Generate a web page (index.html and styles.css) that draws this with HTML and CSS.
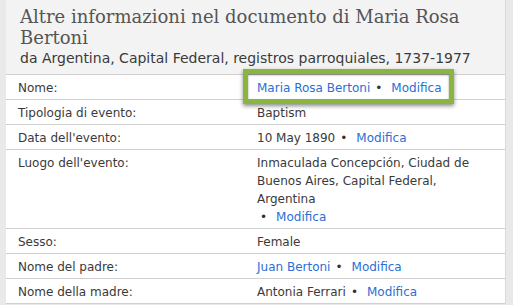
FILE: index.html
```html
<!DOCTYPE html>
<html lang="it">
<head>
<meta charset="utf-8">
<title>Altre informazioni nel documento</title>
<link rel="stylesheet" href="styles.css">
</head>
<body>
<section class="panel">
  <header class="panel-head">
    <h1 class="title">Altre informazioni nel documento di Maria Rosa Bertoni</h1>
    <p class="subtitle">da Argentina, Capital Federal, registros parroquiales, 1737-1977</p>
  </header>
  <dl class="facts">
    <div class="row">
      <dt>Nome:</dt>
      <dd><span class="focus"><a href="#">Maria Rosa Bertoni</a><span class="dot">•</span><a href="#">Modifica</a><span class="focus-ring"></span></span></dd>
    </div>
    <div class="row">
      <dt>Tipologia di evento:</dt>
      <dd>Baptism</dd>
    </div>
    <div class="row">
      <dt>Data dell'evento:</dt>
      <dd>10 May 1890<span class="dot">•</span><a href="#">Modifica</a></dd>
    </div>
    <div class="row">
      <dt>Luogo dell'evento:</dt>
      <dd><span class="place">Inmaculada Concepción, Ciudad de Buenos Aires, Capital Federal, Argentina</span><span class="dot dot-lead">•</span><a href="#">Modifica</a></dd>
    </div>
    <div class="row">
      <dt>Sesso:</dt>
      <dd>Female</dd>
    </div>
    <div class="row">
      <dt>Nome del padre:</dt>
      <dd><a href="#">Juan Bertoni</a><span class="dot">•</span><a href="#">Modifica</a></dd>
    </div>
    <div class="row">
      <dt>Nome della madre:</dt>
      <dd>Antonia Ferrari<span class="dot">•</span><a href="#">Modifica</a></dd>
    </div>
  </dl>
</section>
</body>
</html>
```
FILE: styles.css
```css
html, body {
  margin: 0;
  padding: 0;
}

body {
  background: #e9e9e9;
  font-family: "DejaVu Sans", Verdana, sans-serif;
  font-size: 12px;
  color: #3a3a3a;
}

.panel {
  margin-left: 6px;
  width: 499px;
  border-right: 1px solid #d9d9d9;
  background: #fff;
}

.panel-head {
  background: #f3f3f3;
  padding: 6px 14px 7px;
}

.title {
  margin: 0;
  font-family: "DejaVu Serif", Georgia, serif;
  font-weight: normal;
  font-size: 18px;
  line-height: 21px;
  color: #555;
}

.subtitle {
  margin: 1px 0 0;
  font-size: 14px;
  line-height: 18px;
  color: #3a3a3a;
}

.facts {
  margin: 0;
}

.row {
  display: grid;
  grid-template-columns: 239px 1fr;
  padding: 4px 12px 2px;
  border-top: 1px solid #cfcfcf;
  line-height: 18px;
}

.row:last-child {
  border-bottom: 1px solid #cfcfcf;
}

dt, dd {
  margin: 0;
}

a {
  color: #2a6fd4;
  text-decoration: none;
}

.dot {
  margin: 0 9px 0 5px;
  color: #333;
}

.place {
  display: block;
}

.dot-lead {
  margin-left: 3px;
}

/* highlighted name value */
.focus {
  position: relative;
  display: inline-block;
}

.focus-ring {
  position: absolute;
  top: -10px;
  left: -14px;
  right: -13px;
  bottom: -7px;
  border: 5px solid #89b63e;
  box-shadow: inset 0 1px 2px rgba(0, 0, 0, 0.45), 0 2px 4px rgba(0, 0, 0, 0.45);
  pointer-events: none;
}
```
